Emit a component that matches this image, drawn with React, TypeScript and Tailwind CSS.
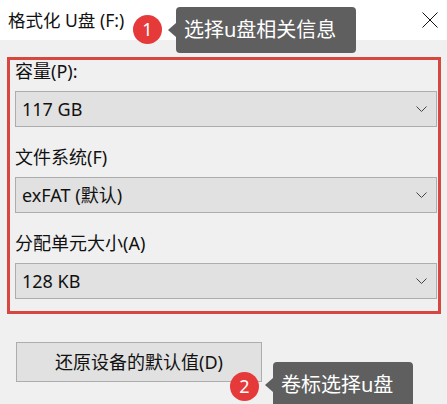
import React from 'react';

const font = { fontFamily: '"Noto Sans", "Noto Sans CJK SC", sans-serif' };

function Chevron() {
  return (
    <svg width="11" height="6" viewBox="0 0 11 6" fill="none" className="shrink-0">
      <path d="M0.5 0.5 L5.5 5.5 L10.5 0.5" stroke="#444" strokeWidth="1" />
    </svg>
  );
}

function Field({ label, value }: { label: string; value: string }) {
  return (
    <div className="flex flex-col gap-[9px]">
      <div className="h-[22px] leading-[22px] text-[18px]">{label}</div>
      <div className="h-[36px] flex items-center justify-between pl-[6px] pr-[9px] bg-[#e1e1e1] border border-[#adadad] text-[18px]">
        <span>{value}</span>
        <Chevron />
      </div>
    </div>
  );
}

function Badge({ n, className }: { n: number; className: string }) {
  return (
    <div className={`absolute w-[29px] h-[29px] rounded-full bg-[#e63a3a] text-white text-[18px] flex items-center justify-center ${className}`}>
      {n}
    </div>
  );
}

function Tip({ text, className }: { text: string; className: string }) {
  return (
    <div className={`absolute h-[46px] rounded-[4px] bg-[#5f5f5f] text-white text-[20px] flex items-center pl-[8px] ${className}`}>
      <span className="absolute left-[-8px] top-[16px] w-0 h-0 border-y-[7px] border-y-transparent border-r-[8px] border-r-[#5f5f5f]" />
      {text}
    </div>
  );
}

export default function App() {
  return (
    <div className="relative w-[447px] h-[404px] overflow-hidden bg-[#f0f0f0] text-[#111]" style={font}>
      {/* title bar */}
      <div className="h-[40px] bg-white flex items-center justify-between pl-[8px] pr-[9px]">
        <span className="text-[17.5px]">格式化 U盘 (F:)</span>
        <svg width="16" height="16" viewBox="0 0 16 16">
          <path d="M0.5 0.5 L15.5 15.5 M15.5 0.5 L0.5 15.5" stroke="#111" strokeWidth="1" />
        </svg>
      </div>

      <div className="flex flex-col items-start pt-[17px] pl-[7px]">
        {/* highlighted options */}
        <div className="w-[434px] flex flex-col gap-[19px] border-[3px] border-[#d8473f] pl-[5px] pr-[1px] pb-[12px]">
          <Field label="容量(P):" value="117 GB" />
          <Field label="文件系统(F)" value="exFAT (默认)" />
          <Field label="分配单元大小(A)" value="128 KB" />
        </div>

        <button className="mt-[28px] ml-[9px] w-[246px] h-[40px] bg-[#e1e1e1] border border-[#adadad] flex items-center justify-center text-[18px]">
          还原设备的默认值(D)
        </button>
      </div>

      <Badge n={1} className="left-[133px] top-[15px]" />
      <Tip text="选择u盘相关信息" className="left-[176px] top-[7px] w-[180px]" />
      <Badge n={2} className="left-[230px] top-[372px]" />
      <Tip text="卷标选择u盘" className="left-[273px] top-[362px] w-[140px]" />
    </div>
  );
}
